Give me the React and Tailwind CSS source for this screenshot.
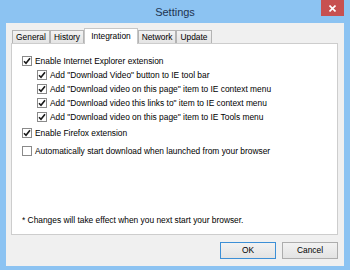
import React from 'react';

const font = { fontFamily: '"Liberation Sans", Arial, sans-serif' };

const Check = ({ checked }) => (
  <span className="flex h-[10px] w-[10px] shrink-0 items-center justify-center border border-[#8a8a8a] bg-white">
    {checked && (
      <svg width="8" height="8" viewBox="0 0 8 8">
        <path d="M1 4.2 L3 6.3 L7 1.2" fill="none" stroke="#1a1a1a" strokeWidth="1.6" />
      </svg>
    )}
  </span>
);

const Row = ({ label, checked, indent, className = '' }) => (
  <div className={`flex h-[14px] items-center gap-[3px] ${indent ? 'pl-[15px]' : ''} ${className}`}>
    <Check checked={checked} />
    <span className="whitespace-nowrap leading-none">{label}</span>
  </div>
);

const tabs = [
  { name: 'General', w: 'w-[38px]' },
  { name: 'History', w: 'w-[34px]' },
  { name: 'Integration', w: 'w-[54px]', active: true },
  { name: 'Network', w: 'w-[38px]' },
  { name: 'Update', w: 'w-[36px]' },
];

export default function App() {
  return (
    <div className="flex h-[270px] w-[350px] flex-col bg-[#8cc3f2] text-[8.4px] text-black" style={font}>
      <div className="relative h-[23px] shrink-0">
        <div className="pt-[4px] text-center text-[11px] leading-[16px] text-[#1e3450]">Settings</div>
        <div className="absolute right-[6px] top-0 flex h-[16px] w-[23px] items-center justify-center bg-[#c75050]">
          <svg width="7" height="7" viewBox="0 0 7 7">
            <path d="M0.5 0.5 L6.5 6.5 M6.5 0.5 L0.5 6.5" stroke="#fff" strokeWidth="1.6" />
          </svg>
        </div>
      </div>

      <div className="mx-[6px] mb-[4px] flex flex-1 flex-col bg-[#f0f0f0] pl-[5px] pr-[6px] pt-[5px]">
        <div className="flex h-[15px] items-end pl-[1px]">
          {tabs.map(t =>
            t.active ? (
              <div key={t.name} className={`relative z-10 -mb-px flex h-[16px] ${t.w} items-center justify-center border border-b-0 border-[#c6c6c6] bg-white`}>
                {t.name}
              </div>
            ) : (
              <div key={t.name} className={`flex h-[13px] ${t.w} items-center justify-center border border-b-0 border-[#b4b4b4] bg-gradient-to-b from-[#f3f3f3] to-[#e4e4e4]`}>
                {t.name}
              </div>
            )
          )}
        </div>

        <div className="flex h-[192px] flex-col border border-[#cdcdcd] bg-white pl-[10px] pt-[10px] pb-[7px]">
          <Row label="Enable Internet Explorer extension" checked />
          <Row label={'Add "Download Video" button to IE tool bar'} checked indent />
          <Row label={'Add "Download video on this page" item to IE context menu'} checked indent />
          <Row label={'Add "Download video this links to" item to IE context menu'} checked indent />
          <Row label={'Add "Download video on this page" item to IE Tools menu'} checked indent />
          <Row label="Enable Firefox extension" checked className="mt-[2px]" />
          <Row label="Automatically start download when launched from your browser" className="mt-[4px]" />
          <div className="mt-auto flex h-[14px] items-center whitespace-nowrap">
            * Changes will take effect when you next start your browser.
          </div>
        </div>

        <div className="flex justify-end gap-[6px] pt-[7px]">
          <button className="h-[17px] w-[56px] border border-[#3c8fd6] bg-gradient-to-b from-[#f2f2f2] to-[#e3e3e3] leading-none">OK</button>
          <button className="h-[17px] w-[56px] border border-[#adadad] bg-gradient-to-b from-[#f2f2f2] to-[#e3e3e3] leading-none">Cancel</button>
        </div>
      </div>
    </div>
  );
}
